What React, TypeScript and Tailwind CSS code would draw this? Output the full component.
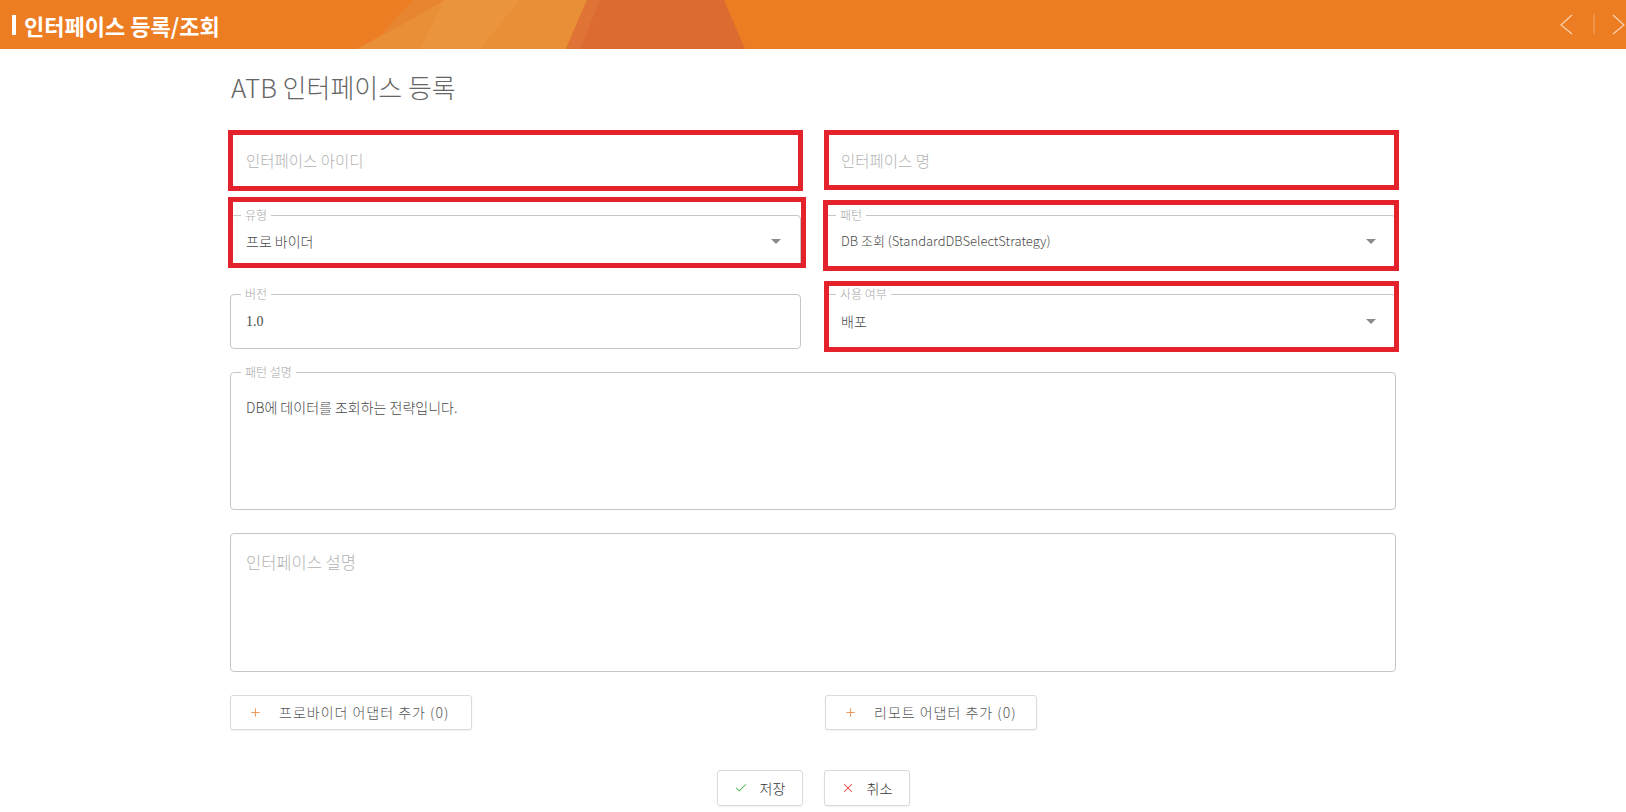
import { Check, Plus, X } from "lucide-react";

function Caret() {
  return (
    <svg width="10" height="5" viewBox="0 0 10 5" className="shrink-0">
      <polygon points="0,0 10,0 5,5" fill="#8a8a8a" />
    </svg>
  );
}

// red annotation frame drawn over a field
function Mark({ className }: { readonly className: string }) {
  return (
    <div
      className={`pointer-events-none absolute border-[5px] border-[#e3222b] ${className}`}
    />
  );
}

function PlainField({ placeholder }: { readonly placeholder: string }) {
  return (
    <div className="flex h-14 items-center rounded border border-[#c6c6c6] pl-[15px] text-[15.5px] text-[#b3b3b3]">
      {placeholder}
    </div>
  );
}

function LabeledField({
  label,
  value,
  select,
  height,
  valueClass,
}: {
  readonly label: string;
  readonly value: string;
  readonly select?: boolean;
  readonly height: string;
  readonly valueClass: string;
}) {
  return (
    <div className={`relative rounded border border-[#c6c6c6] ${height}`}>
      <span className="absolute -top-[9px] left-[10px] bg-white px-1 text-[12px] leading-[16px] text-[#a8a8a8]">
        {label}
      </span>
      <div className="flex h-full items-center justify-between pl-[15px] pr-[19px] text-[#4a4a4a]">
        <span className={valueClass}>{value}</span>
        {select && <Caret />}
      </div>
    </div>
  );
}

function AddButton({ label, width }: { readonly label: string; readonly width: string }) {
  return (
    <button
      className={`flex h-[35px] items-center gap-[17px] rounded-[3px] border border-[#dadada] bg-white px-[18px] text-[14px] tracking-[1px] text-[#555] shadow-[0_1px_2px_rgb(0_0_0/0.06)] ${width}`}
      type="button"
    >
      <Plus size={13} strokeWidth={1.8} color="#ef9757" />
      {label}
    </button>
  );
}

export default function App() {
  return (
    <div className="min-h-screen bg-white font-['Noto_Sans_CJK_KR','Noto_Sans',sans-serif] font-light">
      <header className="relative h-[49px] overflow-hidden bg-[#ed7d22]">
        <svg
          className="absolute inset-0 h-full w-full"
          viewBox="0 0 1626 49"
          preserveAspectRatio="none"
        >
          <polygon points="357,49 444,0 587,0 566,49" fill="#e98f38" />
          <polygon points="413,0 444,0 400,26 380,36" fill="#e88530" />
          <polygon points="444,0 520,0 480,49 420,49" fill="#eb9a44" opacity="0.5" />
          <polygon points="587,0 724,0 745,49 566,49" fill="#dc6b31" />
          <polygon points="587,0 600,0 580,49 566,49" fill="#e27a3c" opacity="0.6" />
        </svg>
        <div className="relative flex h-full items-center pl-3">
          <span className="h-[20px] w-1 bg-white" />
          <h1 className="ml-2 text-[22px] font-bold leading-none text-white">
            인터페이스 등록/조회
          </h1>
          <svg className="ml-auto" width="66" height="49" viewBox="0 0 66 49">
            <polyline
              points="12,15 1,25 12,34"
              fill="none"
              stroke="#fff"
              strokeOpacity="0.65"
              strokeWidth="1.2"
            />
            <line x1="34" y1="14" x2="34" y2="34" stroke="#fff" strokeOpacity="0.35" />
            <polyline
              points="53,15 64,25 53,34"
              fill="none"
              stroke="#fff"
              strokeOpacity="0.65"
              strokeWidth="1.2"
            />
          </svg>
        </div>
      </header>

      <main className="mx-auto w-[1166px] pt-[19px]">
        <h2 className="pl-px text-[26px] leading-[38px] text-[#666]">ATB 인터페이스 등록</h2>

        <div className="mt-[27px] grid grid-cols-2 gap-x-6">
          <div className="relative">
            <PlainField placeholder="인터페이스 아이디" />
            <Mark className="-bottom-[2px] -left-[2px] -right-[2px] -top-[3px]" />
          </div>
          <div className="relative">
            <PlainField placeholder="인터페이스 명" />
            <Mark className="-bottom-[1px] -left-[1px] -right-[3px] -top-[3px]" />
          </div>
        </div>

        <div className="mt-[26px] grid grid-cols-2 gap-x-6">
          <div className="relative">
            <LabeledField
              label="유형"
              value="프로 바이더"
              select
              height="h-[52px]"
              valueClass="text-[14px]"
            />
            <Mark className="-bottom-[1px] -left-[2px] -right-[5px] -top-[18px]" />
          </div>
          <div className="relative">
            <LabeledField
              label="패턴"
              value="DB 조회 (StandardDBSelectStrategy)"
              select
              height="h-[52px]"
              valueClass="text-[13px]"
            />
            <Mark className="-bottom-[4px] -left-[2px] -right-[3px] -top-[15px]" />
          </div>
        </div>

        <div className="mt-[27px] grid grid-cols-2 gap-x-6">
          <LabeledField
            label="버전"
            value="1.0"
            height="h-[55px]"
            valueClass="font-['Liberation_Serif',serif] text-[14px]"
          />
          <div className="relative">
            <LabeledField
              label="사용 여부"
              value="배포"
              select
              height="h-[55px]"
              valueClass="text-[14px]"
            />
            <Mark className="-bottom-[3px] -left-[1px] -right-[3px] -top-[13px]" />
          </div>
        </div>

        <div className="relative mt-[23px] h-[138px] rounded border border-[#c6c6c6] px-[15px] pt-[24px]">
          <span className="absolute -top-[9px] left-[10px] bg-white px-1 text-[12px] leading-[16px] text-[#a8a8a8]">
            패턴 설명
          </span>
          <p className="text-[14px] leading-[20px] text-[#4a4a4a]">DB에 데이터를 조회하는 전략입니다.</p>
        </div>

        <div className="mt-[23px] h-[139px] rounded border border-[#c6c6c6] px-[15px] pt-4">
          <p className="text-[16.5px] leading-[24px] text-[#b3b3b3]">인터페이스 설명</p>
        </div>

        <div className="mt-[23px] grid grid-cols-2 gap-x-6">
          <div>
            <AddButton label="프로바이더 어댑터 추가 (0)" width="w-[242px]" />
          </div>
          <div>
            <AddButton label="리모트 어댑터 추가 (0)" width="w-[212px]" />
          </div>
        </div>

        <div className="mt-10 flex justify-center gap-[21px]">
          <button
            className="flex h-[36px] w-[86px] items-center justify-center gap-[12px] rounded-[3px] border border-[#dadada] bg-white text-[14px] text-[#333] shadow-[0_1px_2px_rgb(0_0_0/0.06)]"
            type="button"
          >
            <Check size={14} strokeWidth={1.8} color="#5cb85c" />
            저장
          </button>
          <button
            className="flex h-[36px] w-[86px] items-center justify-center gap-[12px] rounded-[3px] border border-[#dadada] bg-white text-[14px] text-[#333] shadow-[0_1px_2px_rgb(0_0_0/0.06)]"
            type="button"
          >
            <X size={14} strokeWidth={1.8} color="#e04848" />
            취소
          </button>
        </div>
      </main>
    </div>
  );
}
